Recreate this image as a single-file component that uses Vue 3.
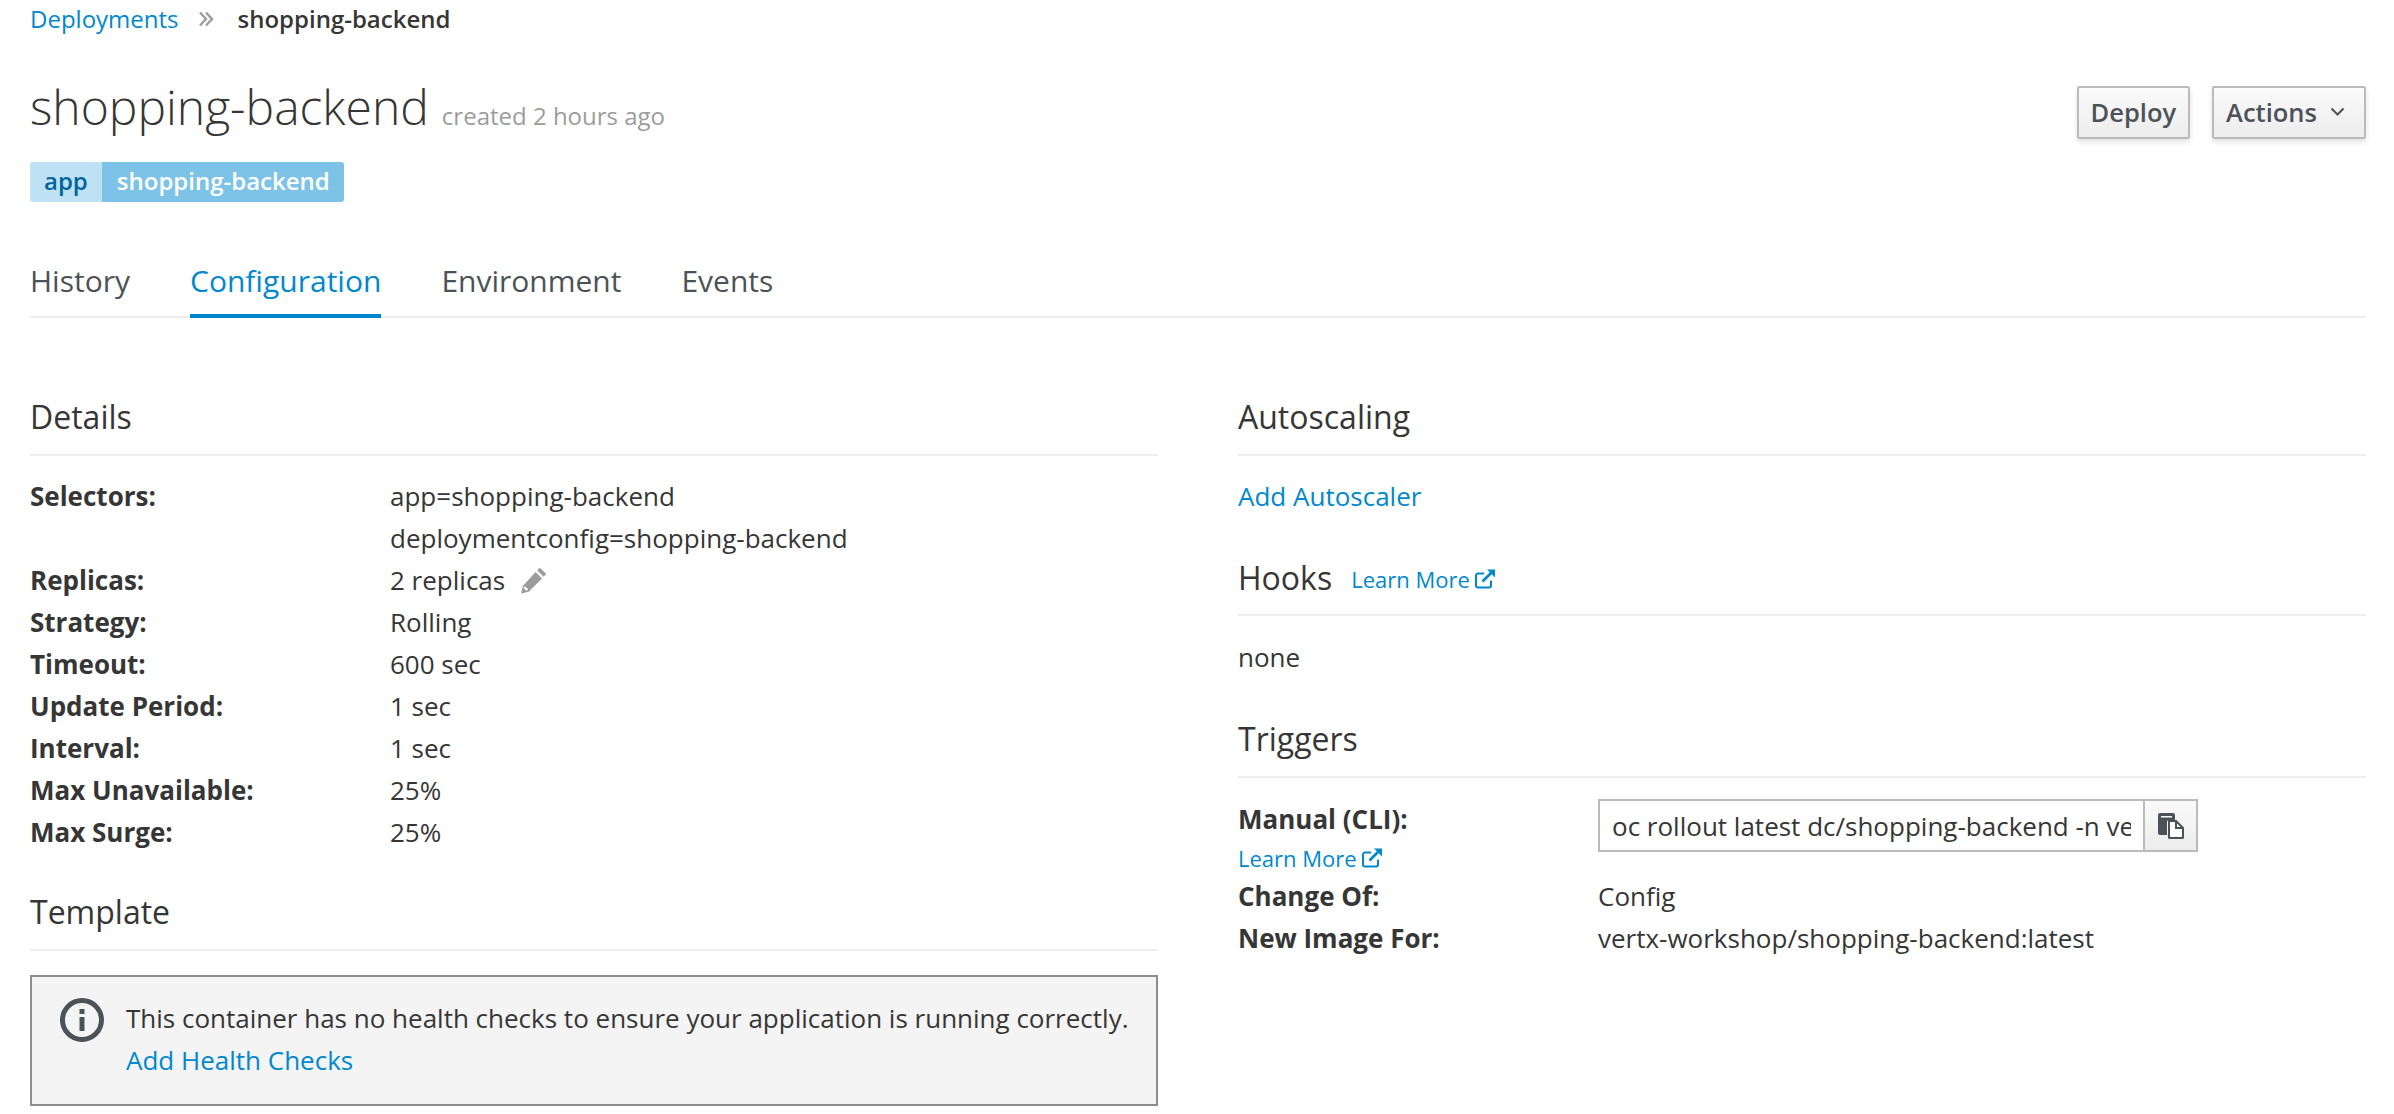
<script setup>
const details = [
  { label: "Selectors:", values: ["app=shopping-backend", "deploymentconfig=shopping-backend"] },
  { label: "Replicas:", values: ["2 replicas"], edit: true },
  { label: "Strategy:", values: ["Rolling"] },
  { label: "Timeout:", values: ["600 sec"] },
  { label: "Update Period:", values: ["1 sec"] },
  { label: "Interval:", values: ["1 sec"] },
  { label: "Max Unavailable:", values: ["25%"] },
  { label: "Max Surge:", values: ["25%"] },
];
const tabs = ["History", "Configuration", "Environment", "Events"];
</script>

<template>
  <div class="page">
    <div class="crumbs">
      <a class="link">Deployments</a>
      <svg class="crumb-sep" width="16" height="18" viewBox="0 0 16 18">
        <path d="M2 2.500 8 9l-6 6.500M8 2.500 14 9l-6 6.500" fill="none" stroke="#9c9c9c" stroke-width="2.400" />
      </svg>
      <span class="crumb-cur">shopping-backend</span>
    </div>

    <div class="head">
      <div>
        <div class="title-row">
          <h1>shopping-backend</h1>
          <span class="created">created 2 hours ago</span>
        </div>
        <div class="badge"><span class="badge-key">app</span><span class="badge-val">shopping-backend</span></div>
      </div>
      <div class="actions">
        <button class="btn">Deploy</button>
        <button class="btn">
          Actions
          <svg class="caret" width="15" height="10" viewBox="0 0 15 10"><path d="M1.500 1.500 7.500 7.500l6-6" fill="none" stroke="#4d5258" stroke-width="2" /></svg>
        </button>
      </div>
    </div>

    <div class="tabs">
      <a v-for="t in tabs" :key="t" class="tab" :class="{ active: t === 'Configuration' }">{{ t }}</a>
    </div>

    <div class="cols">
      <div>
        <h3 class="section">Details</h3>
        <div class="rows">
          <div v-for="d in details" :key="d.label" class="row">
            <div class="label">{{ d.label }}</div>
            <div>
              <div v-for="v in d.values" :key="v">
                {{ v }}
                <svg v-if="d.edit" class="pencil" width="30" height="30" viewBox="0 0 28 28">
                  <path d="M19.500 2.500 25.500 8.500 23 11 17 5Z M15.500 6.500 21.500 12.500 9 25 2 26.500 3.500 19.500Z" fill="#9c9c9c" />
                  <path d="M4.800 20.600 7.800 23.600" stroke="#fff" stroke-width="2" />
                </svg>
              </div>
            </div>
          </div>
        </div>

        <h3 class="section template">Template</h3>
        <div class="alert">
          <svg class="info" width="44" height="44" viewBox="0 0 44 44">
            <circle cx="22" cy="22" r="19.500" fill="none" stroke="#4d5258" stroke-width="5" />
            <rect x="19.500" y="11" width="5" height="5" fill="#4d5258" />
            <rect x="19.500" y="19" width="5" height="14" fill="#4d5258" />
          </svg>
          <div>
            <div>This container has no health checks to ensure your application is running correctly.</div>
            <a class="link">Add Health Checks</a>
          </div>
        </div>
      </div>

      <div>
        <h3 class="section">Autoscaling</h3>
        <div class="block"><a class="link">Add Autoscaler</a></div>

        <h3 class="section hooks">
          Hooks
          <a class="learn hook-learn">Learn More
            <svg class="ext" width="22" height="22" viewBox="0 0 22 22"><path d="M17 12.500V17.500a2 2 0 0 1-2 2H4a2 2 0 0 1-2-2V7.500a2 2 0 0 1 2-2h6" fill="none" stroke="#0088ce" stroke-width="2" /><path d="M8.500 13.500 18 4" stroke="#0088ce" stroke-width="2.600" /><path d="M13 1.500h8v8z" fill="#0088ce" /></svg>
          </a>
        </h3>
        <div class="block none">none</div>

        <h3 class="section triggers">Triggers</h3>
        <div class="trigger-rows">
          <div class="trow manual">
            <div>
              <div class="label">Manual (CLI):</div>
              <a class="learn manual-learn">Learn More
                <svg class="ext" width="22" height="22" viewBox="0 0 22 22"><path d="M17 12.500V17.500a2 2 0 0 1-2 2H4a2 2 0 0 1-2-2V7.500a2 2 0 0 1 2-2h6" fill="none" stroke="#0088ce" stroke-width="2" /><path d="M8.500 13.500 18 4" stroke="#0088ce" stroke-width="2.600" /><path d="M13 1.500h8v8z" fill="#0088ce" /></svg>
              </a>
            </div>
            <div class="copy">
              <input class="copy-input" readonly value="oc rollout latest dc/shopping-backend -n vertx-workshop" />
              <div class="copy-btn">
                <svg width="26" height="26" viewBox="0 0 26 26">
                  <path d="M0 2a2 2 0 0 1 2-2h13a2 2 0 0 1 2 2v5H11a2 2 0 0 0-2 2v13H2a2 2 0 0 1-2-2Z" fill="#4d5258" />
                  <rect x="3" y="3" width="11" height="1.500" fill="#fff" />
                  <path d="M11 8h7l7 7v9.500a.5.5 0 0 1-.5.5h-13a.5.5 0 0 1-.5-.5Z" fill="#fff" stroke="#4d5258" stroke-width="2" />
                  <path d="M18 8v7h7" fill="none" stroke="#4d5258" stroke-width="2" />
                </svg>
              </div>
            </div>
          </div>
          <div class="trow">
            <div class="label">Change Of:</div>
            <div>Config</div>
          </div>
          <div class="trow">
            <div class="label">New Image For:</div>
            <div>vertx-workshop/shopping-backend:latest</div>
          </div>
        </div>
      </div>
    </div>
  </div>
</template>

<style>
html, body {
  background: #fff;
}
</style>

<style scoped>
.page {
  box-sizing: border-box;
  width: 2394px;
  height: 1114px;
  overflow: hidden;
  padding: 0 28px 0 30px;
  font-family: "Open Sans", "Noto Sans", sans-serif;
  font-size: 26px;
  line-height: 42px;
  color: #363636;
}

.link {
  color: #0088ce;
}

.crumbs {
  display: flex;
  height: 38px;
  align-items: center;
  font-size: 24px;
}

.crumb-sep {
  margin: 0 24px 0 19px;
}

.crumb-cur {
  font-weight: 600;
}

.head {
  display: flex;
  justify-content: space-between;
  margin-top: 40px;
}

.title-row {
  display: flex;
  align-items: baseline;
  height: 62px;
}

h1 {
  margin: 0;
  font-size: 48px;
  font-weight: 300;
  line-height: 58px;
}

.created {
  margin-left: 13px;
  color: #9c9c9c;
  font-size: 24px;
}

.badge {
  display: inline-flex;
  height: 40px;
  margin-top: 22px;
  border-radius: 3px;
  overflow: hidden;
  font-size: 24px;
  font-weight: 600;
  line-height: 38px;
}

.badge-key {
  padding: 0 14px;
  background: #bee1f4;
  color: #00659c;
}

.badge-val {
  padding: 0 14px 0 15px;
  background: #7dc3e8;
  color: #fff;
}

.actions {
  display: flex;
  gap: 22px;
  margin-top: 8px;
  height: 53px;
}

.btn {
  display: flex;
  align-items: center;
  height: 53px;
  padding: 0 12px 2px;
  border: 2px solid #bbb;
  border-radius: 2px;
  background: linear-gradient(#fafafa, #ededed);
  box-shadow: 0 3px 5px rgba(3, 3, 3, 0.12);
  color: #4d5258;
  font-family: inherit;
  font-size: 25.500px;
  font-weight: 600;
}

.caret {
  margin-left: 13px;
  margin-right: 7px;
}

.tabs {
  display: flex;
  gap: 60px;
  margin-top: 44px;
  height: 72px;
  border-bottom: 2px solid #ededed;
  box-sizing: border-box;
}

.tab {
  height: 72px;
  box-sizing: border-box;
  color: #4d5258;
  font-size: 30px;
  line-height: 70px;
}

.tab.active {
  color: #0088ce;
  border-bottom: 4px solid #0088ce;
}

.cols {
  display: grid;
  grid-template-columns: 1128px 1128px;
  gap: 80px;
  margin-top: 60px;
}

.section {
  display: flex;
  align-items: center;
  height: 78px;
  margin: 0;
  padding-top: 2px;
  box-sizing: border-box;
  border-bottom: 2px solid #ededed;
  font-size: 32px;
  font-weight: 400;
}

.rows {
  margin-top: 19px;
}

.row {
  display: grid;
  grid-template-columns: 360px 1fr;
}

.label {
  font-weight: 700;
}

.pencil {
  margin-left: 7px;
  vertical-align: -5px;
}

.template {
  margin-top: 20px;
}

.alert {
  display: flex;
  gap: 22px;
  height: 131px;
  box-sizing: border-box;
  margin-top: 24px;
  padding: 20px 24px 0 28px;
  border: 2px solid #8b8d8f;
  background: #f4f4f4;
}

.info {
  margin-top: 1px;
  flex: none;
}

.block {
  margin-top: 19px;
}

.none {
  margin-top: 20px;
}

.hooks {
  margin-top: 23px;
  height: 76px;
}

.learn {
  color: #0088ce;
  font-size: 22px;
  display: inline-flex;
  align-items: center;
}

.hook-learn {
  margin-left: 19px;
  margin-top: 2px;
}

.manual-learn {
  display: flex;
  margin-top: -3px;
}

.ext {
  margin-left: 4px;
}

.triggers {
  margin-top: 22px;
}

.trigger-rows {
  margin-top: 20px;
}

.trow {
  display: grid;
  grid-template-columns: 360px 600px;
}

.manual {
  height: 77px;
}

.copy {
  display: flex;
  height: 53px;
  margin-top: 1px;
}

.copy-input {
  flex: 1;
  min-width: 0;
  box-sizing: border-box;
  padding: 0 12px;
  border: 2px solid #bbb;
  border-radius: 0;
  outline: none;
  font-family: inherit;
  font-size: 26px;
  color: #363636;
}

.copy-btn {
  display: flex;
  align-items: center;
  justify-content: center;
  width: 53px;
  box-sizing: border-box;
  border: 2px solid #bbb;
  border-left: 0;
  background: linear-gradient(#fafafa, #ededed);
}
</style>
